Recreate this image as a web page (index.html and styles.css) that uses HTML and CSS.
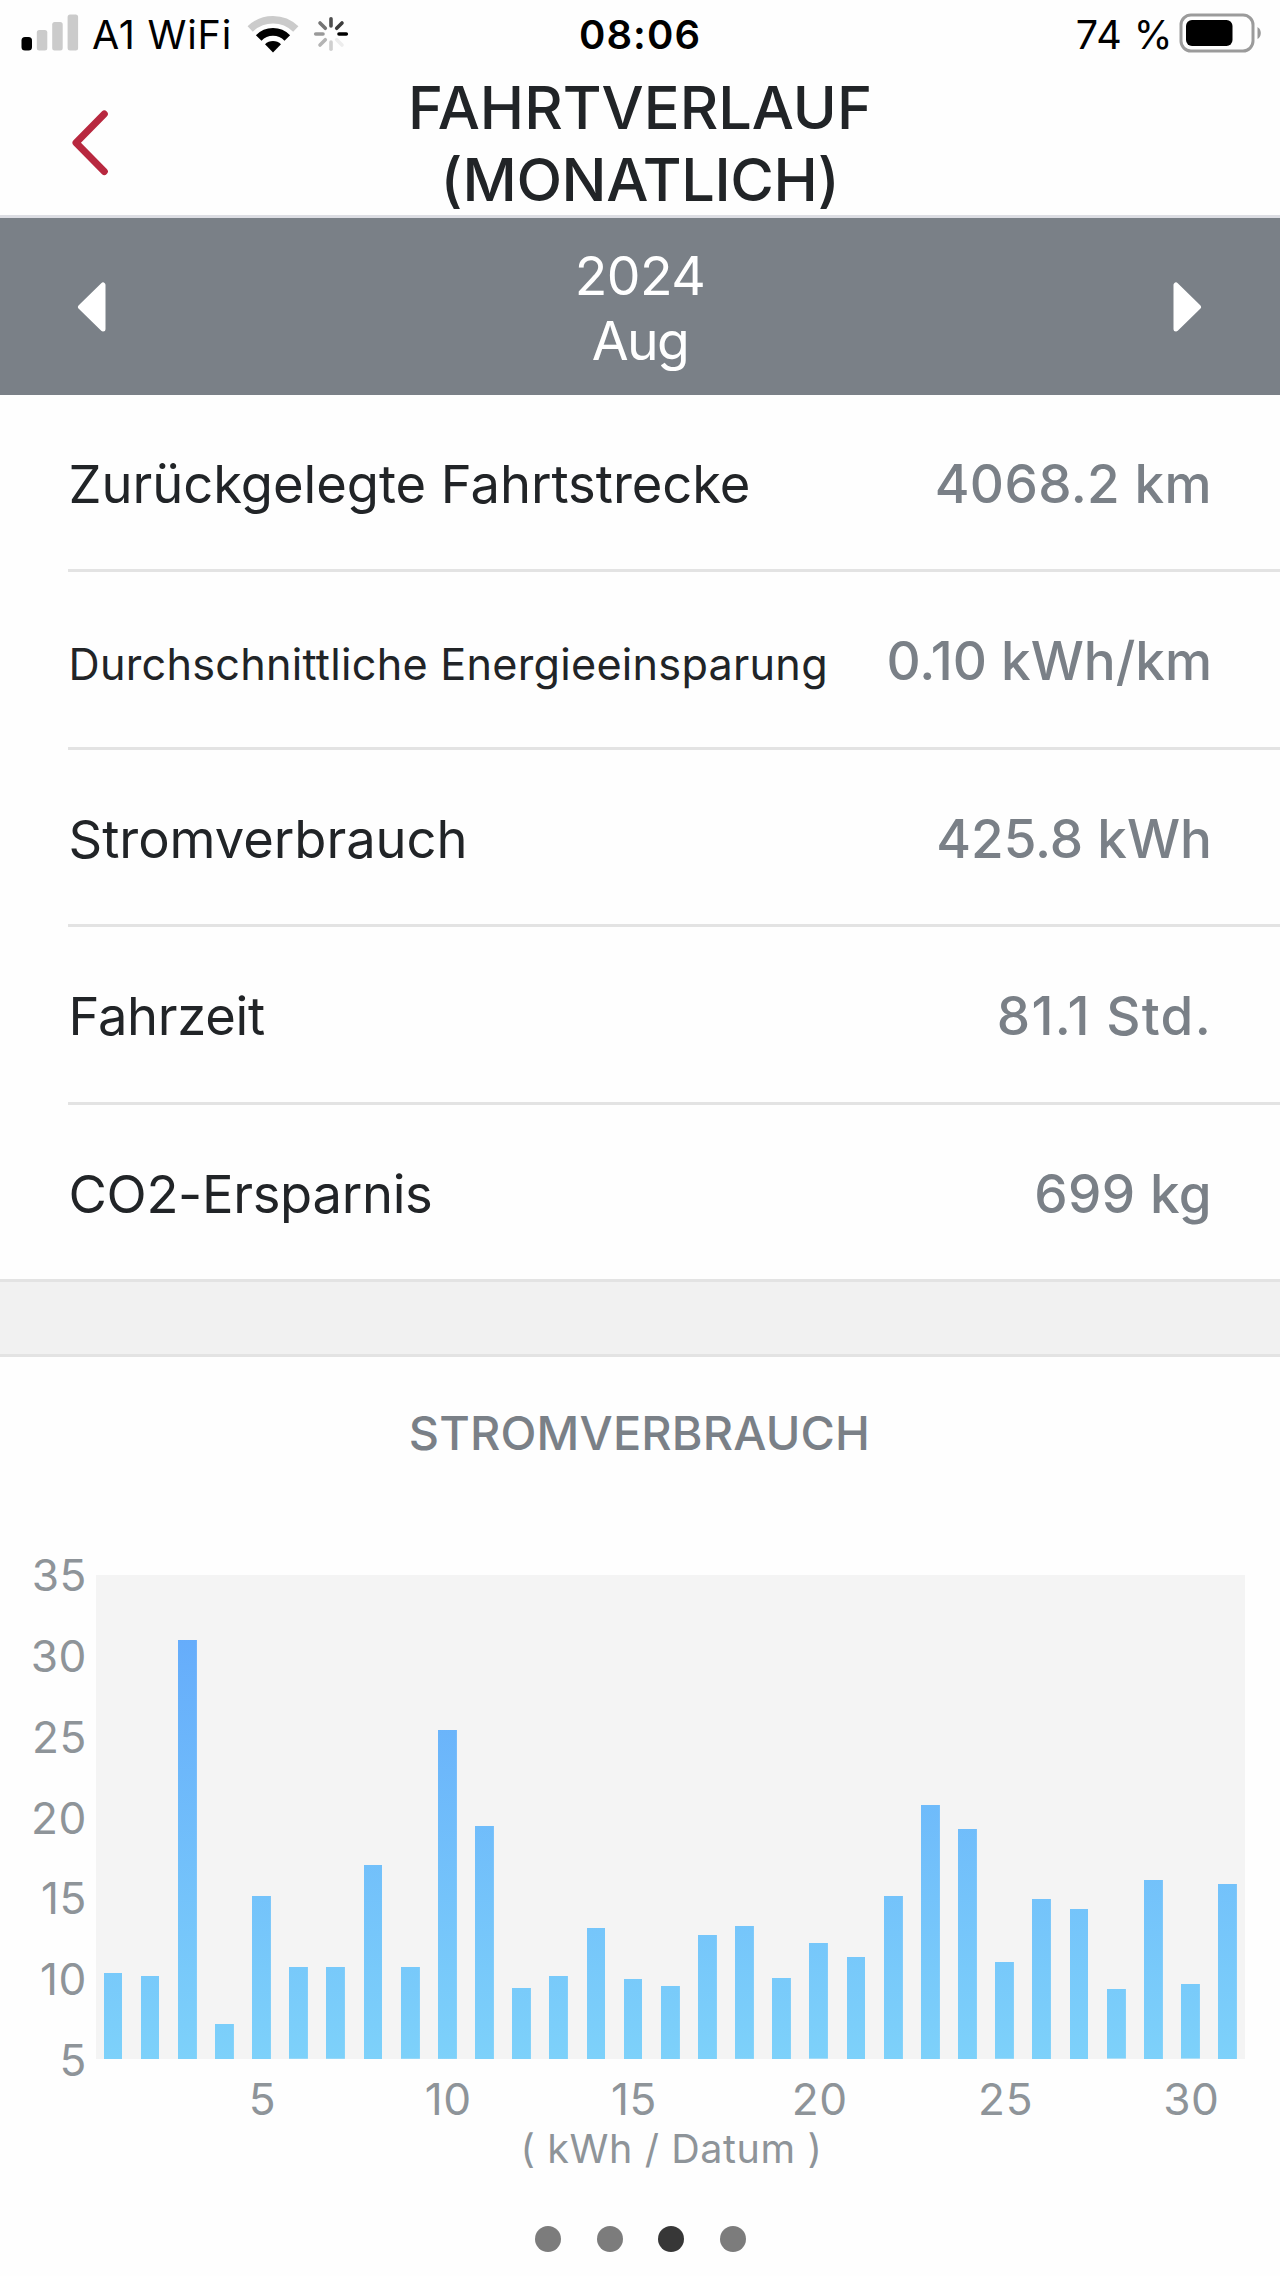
FILE: index.html
```html
<!DOCTYPE html>
<html lang="de">
<head>
<meta charset="utf-8">
<title>Fahrtverlauf (monatlich)</title>
<link rel="stylesheet" href="styles.css">
</head>
<body>
<div class="status">
  <div class="status-left">
    <svg class="signal" width="58" height="38" viewBox="0 0 58 38">
      <rect x="0.5" y="23" width="10.5" height="13.5" rx="3.5" fill="#000"/>
      <rect x="15.8" y="16" width="10.5" height="20.5" rx="2.5" fill="#cbcbcb"/>
      <rect x="31.2" y="8" width="10.5" height="28.5" rx="2.5" fill="#cbcbcb"/>
      <rect x="46.6" y="0.5" width="10.5" height="36" rx="2.5" fill="#cbcbcb"/>
    </svg>
    <span class="carrier">A1 WiFi</span>
    <svg class="wifi" width="52" height="38" viewBox="0 0 52 38">
      <path d="M3.2 14A32.5 32.5 0 0 1 48.8 14" fill="none" stroke="#cbcbcb" stroke-width="7.5"/>
      <path d="M11.7 22.9A20 20 0 0 1 40.3 22.9" fill="none" stroke="#000" stroke-width="7.8"/>
      <path d="M26 37.5L18 29.2A11.5 11.5 0 0 1 34 29.2Z" fill="#000"/>
    </svg>
    <svg class="spinner" width="36" height="36" viewBox="-18 -18 36 36" fill="none" stroke-width="3.6" stroke-linecap="round">
      <path d="M0-8V-15.3" stroke="#4e4e4e"/>
      <path d="M5.7-5.7L11-11" stroke="#3c3c3c"/>
      <path d="M8 0H15.3" stroke="#000"/>
      <path d="M5.7 5.7L11 11" stroke="#ededed"/>
      <path d="M0 8V15.3" stroke="#cfcfcf"/>
      <path d="M-5.7 5.7L-11 11" stroke="#b4b4b4"/>
      <path d="M-8 0H-15.3" stroke="#999"/>
      <path d="M-5.7-5.7L-11-11" stroke="#747474"/>
    </svg>
  </div>
  <div class="clock">08:06</div>
  <div class="status-right">
    <span class="percent">74 %</span>
    <svg class="battery" width="84" height="42" viewBox="0 0 84 42">
      <rect x="2" y="2" width="72" height="36" rx="10" fill="none" stroke="#9b9b9b" stroke-width="3"/>
      <rect x="7" y="7" width="46.5" height="26" rx="6" fill="#000"/>
      <path d="M78.5 14Q81.8 16 81.8 20T78.5 26Z" fill="#999"/>
    </svg>
  </div>
</div>

<header class="header">
  <svg class="back" width="38" height="68" viewBox="0 0 38 68"><path d="M33.3 5L5 33.7L33.3 62.5" fill="none" stroke="#b8283f" stroke-width="7" stroke-linecap="round" stroke-linejoin="round"/></svg>
  <h1 class="title">FAHRTVERLAUF<br><span class="title-sub">(MONATLICH)</span></h1>
</header>

<nav class="month">
  <svg width="30" height="50" viewBox="0 0 30 50"><path d="M26 3V47L3.5 25Z" fill="#fff" stroke="#fff" stroke-width="5" stroke-linejoin="round"/></svg>
  <div class="month-label">2024<br><span class="month-name">Aug</span></div>
  <svg width="30" height="50" viewBox="0 0 30 50"><path d="M3 3V47L25.5 25Z" fill="#fff" stroke="#fff" stroke-width="5" stroke-linejoin="round"/></svg>
</nav>

<dl class="stats">
  <div class="row"><dt>Zurückgelegte Fahrtstrecke</dt><dd>4068.2 km</dd></div>
  <div class="row"><dt class="small">Durchschnittliche Energieeinsparung</dt><dd class="dense">0.10 kWh/km</dd></div>
  <div class="row"><dt>Stromverbrauch</dt><dd class="dense">425.8 kWh</dd></div>
  <div class="row"><dt class="tight">Fahrzeit</dt><dd class="wide">81.1 Std.</dd></div>
  <div class="row"><dt class="tight">CO2-Ersparnis</dt><dd>699 kg</dd></div>
</dl>
<div class="divider"></div>

<section class="chart">
  <h2 class="chart-title">STROMVERBRAUCH</h2>
  <div class="chart-body">
    <div class="y-axis"><span>35</span><span>30</span><span>25</span><span>20</span><span>15</span><span>10</span><span>5</span></div>
    <div class="plot">
      <i style="height:86.4px"></i><i style="height:83.2px"></i><i style="height:419.3px"></i><i style="height:35.4px"></i><i style="height:163.2px"></i><i style="height:91.8px"></i><i style="height:91.8px"></i><i style="height:194.3px"></i><i style="height:91.8px"></i><i style="height:328.9px"></i>
      <i style="height:233.2px"></i><i style="height:71px"></i><i style="height:83.2px"></i><i style="height:131px"></i><i style="height:80px"></i><i style="height:73.2px"></i><i style="height:124.3px"></i><i style="height:132.9px"></i><i style="height:81.4px"></i><i style="height:115.7px"></i>
      <i style="height:102px"></i><i style="height:163.2px"></i><i style="height:254px"></i><i style="height:230px"></i><i style="height:96.8px"></i><i style="height:160.4px"></i><i style="height:150px"></i><i style="height:69.6px"></i><i style="height:179px"></i><i style="height:74.6px"></i><i style="height:175.4px"></i>
    </div>
  </div>
  <div class="x-axis"><span>5</span><span>10</span><span>15</span><span>20</span><span>25</span><span>30</span></div>
  <div class="unit">( kWh / Datum )</div>
</section>

<div class="pager"><b></b><b></b><b class="active"></b><b></b></div>
</body>
</html>
```
FILE: styles.css
```css
* { box-sizing: border-box; margin: 0; padding: 0; }
body {
  width: 1280px;
  height: 2276px;
  overflow: hidden;
  background: #fefefe;
  color: #212427;
  font-family: "Inter", "Liberation Sans", sans-serif;
  font-weight: 400;
}
svg { display: block; flex: none; }

.status {
  display: grid;
  grid-template-columns: 1fr auto 1fr;
  align-items: center;
  height: 70px;
  padding: 0 17px 0 21px;
  color: #000;
  font-size: 39.5px;
  line-height: 70px;
}
.status-left, .status-right { display: flex; align-items: center; }
.status-right { justify-content: flex-end; }
.signal { margin-bottom: 4px; }
.carrier { margin-left: 13px; letter-spacing: 0.8px; }
.wifi { margin: 0 0 2px 15px; }
.spinner { margin: 0 0 3px 14px; }
.clock { padding-right: 4px; font-size: 40px; font-weight: 600; letter-spacing: 1.1px; }
.percent { letter-spacing: 0.45px; }
.battery { margin: 0 0 2px 6px; }

.header {
  display: grid;
  grid-template-columns: 200px 1fr 200px;
  height: 148px;
  border-bottom: 3px solid #dcdde3;
}
.back { margin: 39px 0 0 70.5px; }
.title {
  padding-top: 1px;
  font-size: 59.5px;
  font-weight: 500;
  line-height: 72px;
  text-align: center;
}
.title-sub { letter-spacing: -0.4px; }

.month {
  display: flex;
  align-items: center;
  justify-content: space-between;
  height: 177px;
  padding: 0 77px;
  background: #7a8087;
  color: #fff;
}
.month-label {
  padding-top: 5px;
  font-size: 53.5px;
  line-height: 64.7px;
  letter-spacing: -0.5px;
  text-align: center;
}
.month-name { letter-spacing: -1.6px; }

.stats { font-size: 52.5px; }
.row {
  display: flex;
  align-items: center;
  justify-content: space-between;
  height: 177.4px;
  margin-left: 68px;
  padding: 3.5px 68px 0 0;
  border-bottom: 3px solid #e3e3e3;
}
.row:last-child { margin-left: 0; padding-left: 68px; }
.row dt { padding-left: 0.5px; letter-spacing: -0.04px; white-space: nowrap; }
.row dt.small { padding-top: 5px; font-size: 43.2px; letter-spacing: 0.26px; }
.row dt.tight { letter-spacing: -0.3px; }
.row dd { color: #7a8087; font-size: 53px; font-weight: 500; letter-spacing: 0.35px; white-space: nowrap; }
.row dd.dense { letter-spacing: 0; }
.row dd.wide { letter-spacing: 1.3px; }

.divider { height: 75.5px; background: #f1f1f1; border-bottom: 3px solid #e3e3e3; }

.chart { color: #8e9499; }
.chart-title {
  height: 217.5px;
  padding: 46px 1px 0 0;
  color: #7a8087;
  font-size: 46.8px;
  font-weight: 500;
  line-height: 60px;
  letter-spacing: 0.2px;
  text-align: center;
}
.chart-body { display: flex; height: 484px; }
.y-axis {
  display: flex;
  flex-direction: column;
  justify-content: space-between;
  width: 95.5px;
  height: 544.4px;
  margin-top: -29.5px;
  padding-right: 8.5px;
  font-size: 44.2px;
  line-height: 60px;
  letter-spacing: 0.6px;
  text-align: right;
}
.plot {
  display: flex;
  align-items: flex-end;
  justify-content: space-between;
  width: 1149.8px;
  padding: 0 8px;
  background: #f4f4f4;
}
.plot i {
  width: 18.8px;
  background: linear-gradient(to top, #7dd1fa, #62a7fb) bottom / 100% 484px no-repeat;
}
.x-axis {
  display: grid;
  grid-template-columns: repeat(6, 185.8px);
  height: 60px;
  margin: 10.5px 0 0 169.5px;
  font-size: 44.2px;
  line-height: 60px;
  letter-spacing: 0.6px;
  text-align: center;
}
.unit {
  margin: -5px 0 0 63px;
  font-size: 39.5px;
  line-height: 50px;
  letter-spacing: 0.6px;
  text-align: center;
}
.pager { display: flex; justify-content: center; gap: 35.5px; margin: 51.5px 0 0 1px; }
.pager b { width: 26px; height: 26px; border-radius: 50%; background: #7c7c7c; }
.pager .active { background: #373737; }
```
